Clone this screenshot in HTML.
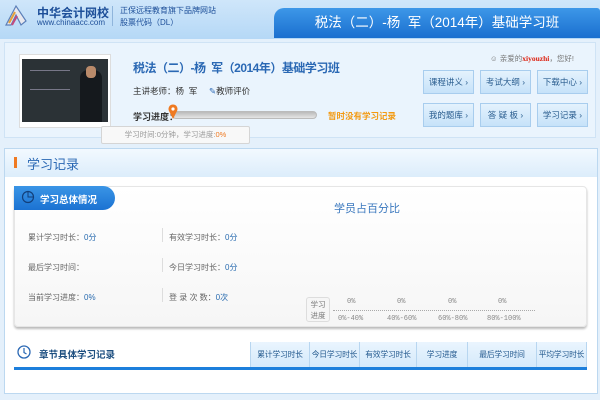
<!DOCTYPE html>
<html><head><meta charset="utf-8"><style>
*{margin:0;padding:0;box-sizing:border-box}
body{width:600px;height:400px;overflow:hidden;background:#e4f0fb;font-family:"Liberation Sans","Noto Sans CJK SC",sans-serif;position:relative;font-size:8px;color:#555}
.a{position:absolute}
.hdr{left:0;top:0;width:600px;height:39px;background:linear-gradient(#cfe6fa,#b5d8f6)}
.tab{left:274px;top:8px;width:326px;height:30px;background:linear-gradient(#3d97e8,#1a6fcf);border-radius:10px 3px 0 0;color:#fff;font-size:13.5px;text-align:center;line-height:30px;white-space:nowrap}
.p1{left:4px;top:42px;width:592px;height:96px;background:#eaf4fd;border:1px solid #cfe3f5}
.btn{position:absolute;width:51px;height:24px;border:1px solid #a8cdee;background:linear-gradient(#e4f2fd,#c6e2f9);color:#2a5d8f;font-size:8.5px;line-height:22px;text-align:center;white-space:nowrap}
.box{left:4px;top:148px;width:594px;height:246px;background:#fff;border:1px solid #bcd8f0}
.card{left:14px;top:186px;width:573px;height:141px;background:linear-gradient(#fff,#f6f6f6);border:1px solid #e6e6e6;border-radius:4px;box-shadow:0 2px 2px #bbb}
.lb{position:absolute;font-size:8px;color:#666;white-space:nowrap}
.lb b{font-weight:normal;color:#2a6cb0}
.th{position:absolute;top:342px;height:26px;line-height:26px;background:linear-gradient(#eaf5fe,#d4e9fb);border-left:1px solid #b8d6f0;color:#245a8f;font-size:7.8px;text-align:center;white-space:nowrap;overflow:hidden;letter-spacing:-0.2px}
.pc{position:absolute;font-family:"Liberation Mono",monospace;font-size:7px;color:#888;white-space:nowrap}
</style></head><body>
<div class="a hdr"></div>
<svg class="a" style="left:4px;top:3px" width="24" height="26" viewBox="0 0 24 26"><path d="M2 22 L12 3 L22 18 L17 22 L12 12 L7 22Z" fill="#e8e8ee" stroke="#5b7fb8" stroke-width="1.2"/><path d="M5 20 L11 9" stroke="#e5a03a" stroke-width="2"/><path d="M8 22 L13 13" stroke="#c44b7f" stroke-width="2"/></svg>
<div class="a" style="left:37px;top:4px;font-size:12px;font-weight:bold;color:#1d4f99">中华会计网校</div>
<div class="a" style="left:37px;top:18px;font-size:8px;color:#1d4f99">www.chinaacc.com</div>
<div class="a" style="left:112px;top:6px;height:20px;border-left:1px solid #8fb5dc"></div>
<div class="a" style="left:120px;top:5px;font-size:8px;color:#1d4f99">正保远程教育旗下品牌网站</div>
<div class="a" style="left:120px;top:17px;font-size:8px;color:#1d4f99">股票代码（DL）</div>
<div class="a tab">税法（二）-杨&nbsp;&nbsp;军（2014年）基础学习班</div>
<div class="a p1"></div>
<div class="a" style="left:19px;top:54px;width:92px;height:74px;background:#fff;border:1px solid #ddd"></div>
<div class="a" style="left:22px;top:59px;width:86px;height:63px;background:#2b3236"></div>
<div class="a" style="left:80px;top:70px;width:22px;height:52px;background:#15191d;border-radius:8px 8px 0 0"></div>
<div class="a" style="left:86px;top:66px;width:10px;height:12px;background:#b98a6a;border-radius:4px"></div>
<div class="a" style="left:30px;top:70px;width:40px;height:20px;border-top:1px solid #778;border-bottom:1px solid #778"></div>
<div class="a" style="left:133px;top:59px;font-size:12px;font-weight:bold;color:#2a68b4;letter-spacing:-0.5px;white-space:nowrap">税法（二）-杨&nbsp;&nbsp;军（2014年）基础学习班</div>
<div class="a" style="left:133px;top:85px;font-size:8.5px;color:#333;white-space:nowrap">主讲老师：杨&nbsp;&nbsp;军&nbsp;&nbsp;&nbsp;&nbsp;&nbsp;<span style="color:#2a68b4">✎</span>教师评价</div>
<div class="a" style="left:133px;top:110px;font-size:9px;font-weight:bold;color:#333">学习进度：</div>
<div class="a" style="left:172px;top:111px;width:145px;height:8px;border-radius:4px;background:linear-gradient(#bbb,#e5e5e5);border:1px solid #bbb"></div>
<svg class="a" style="left:168px;top:104px" width="10" height="16" viewBox="0 0 10 16"><path d="M5 15 L1 7 A4.5 4.5 0 1 1 9 7Z" fill="#ef7a22"/><circle cx="5" cy="5" r="1.6" fill="#fff"/></svg>
<div class="a" style="left:101px;top:126px;width:149px;height:18px;background:#f8f8f8;border:1px solid #d5d5d5;border-radius:2px;text-align:center;line-height:16px;font-size:7.5px;color:#999;white-space:nowrap">学习时间:0分钟，学习进度:<span style="color:#ef7a22">0%</span></div>
<div class="a" style="left:328px;top:110px;font-size:8.5px;font-weight:bold;color:#f39a12">暂时没有学习记录</div>
<div class="a" style="left:490px;top:53px;font-size:7.5px;color:#777;white-space:nowrap">☺ 亲爱的<b style="color:#d21;font-family:'Liberation Serif',serif">xiyouzhi</b>，您好!</div>
<div class="btn" style="left:423px;top:70px">课程讲义 ›</div>
<div class="btn" style="left:480px;top:70px">考试大纲 ›</div>
<div class="btn" style="left:537px;top:70px">下载中心 ›</div>
<div class="btn" style="left:423px;top:103px">我的题库 ›</div>
<div class="btn" style="left:480px;top:103px">答 疑 板 ›</div>
<div class="btn" style="left:537px;top:103px">学习记录 ›</div>
<div class="a box"></div>
<div class="a" style="left:5px;top:149px;width:592px;height:28px;background:linear-gradient(#f2f9ff,#dcedfb)"></div>
<div class="a" style="left:14px;top:157px;width:3px;height:11px;background:#ef7a22"></div>
<div class="a" style="left:27px;top:154px;font-size:13px;color:#2a68b4">学习记录</div>
<div class="a card"></div>
<div class="a" style="left:14px;top:186px;width:101px;height:24px;background:linear-gradient(#3a95e6,#1b72d2);border-radius:0 12px 12px 0/0 12px 12px 0"></div>
<svg class="a" style="left:21px;top:190px" width="14" height="14"><circle cx="7" cy="7" r="5.5" fill="none" stroke="#123f7a" stroke-width="1.2"/><path d="M7 1.5V7H12.5" fill="none" stroke="#123f7a"/></svg>
<div class="a" style="left:40px;top:192px;font-size:9.5px;font-weight:bold;color:#fff">学习总体情况</div>
<div class="lb" style="left:28px;top:232px">累计学习时长：<b>0分</b></div>
<div class="lb" style="left:169px;top:232px">有效学习时长：<b>0分</b></div>
<div class="lb" style="left:28px;top:262px">最后学习时间：</div>
<div class="lb" style="left:169px;top:262px">今日学习时长：<b>0分</b></div>
<div class="lb" style="left:28px;top:292px">当前学习进度：<b>0%</b></div>
<div class="lb" style="left:169px;top:292px">登 录 次 数：<b>0次</b></div>
<div class="a" style="left:162px;top:228px;height:14px;border-left:1px solid #ddd"></div>
<div class="a" style="left:162px;top:258px;height:14px;border-left:1px solid #ddd"></div>
<div class="a" style="left:162px;top:288px;height:14px;border-left:1px solid #ddd"></div>
<div class="a" style="left:334px;top:200px;font-size:11px;color:#3a78be">学员占百分比</div>
<div class="a" style="left:306px;top:297px;width:24px;height:25px;border:1px solid #ddd;border-radius:3px;background:#f6f6f6;font-size:7.5px;color:#777;text-align:center;line-height:11px;padding-top:1px">学习<br>进度</div>
<div class="a" style="left:333px;top:310px;width:202px;border-top:1px dotted #aaa"></div>
<div class="pc" style="left:347px;top:298px">0%</div><div class="pc" style="left:397px;top:298px">0%</div><div class="pc" style="left:448px;top:298px">0%</div><div class="pc" style="left:498px;top:298px">0%</div>
<div class="pc" style="left:338px;top:315px">0%-40%</div><div class="pc" style="left:387px;top:315px">40%-60%</div><div class="pc" style="left:438px;top:315px">60%-80%</div><div class="pc" style="left:487px;top:315px">80%-100%</div>
<svg class="a" style="left:17px;top:344px" width="14" height="16"><circle cx="7" cy="8" r="6" fill="none" stroke="#2a68b4" stroke-width="1.3"/><path d="M7 4V8.5L9.5 10" fill="none" stroke="#2a68b4" stroke-width="1.2"/></svg>
<div class="a" style="left:39px;top:347px;font-size:9.5px;font-weight:bold;color:#1d4f80">章节具体学习记录</div>
<div class="th" style="left:250px;width:59px">累计学习时长</div>
<div class="th" style="left:309px;width:50px">今日学习时长</div>
<div class="th" style="left:359px;width:57px">有效学习时长</div>
<div class="th" style="left:416px;width:51px">学习进度</div>
<div class="th" style="left:467px;width:69px">最后学习时间</div>
<div class="th" style="left:536px;width:51px;border-right:1px solid #b8d6f0">平均学习时长</div>
<div class="a" style="left:14px;top:367px;width:573px;height:3px;background:#1d7fdc"></div>
</body></html>
